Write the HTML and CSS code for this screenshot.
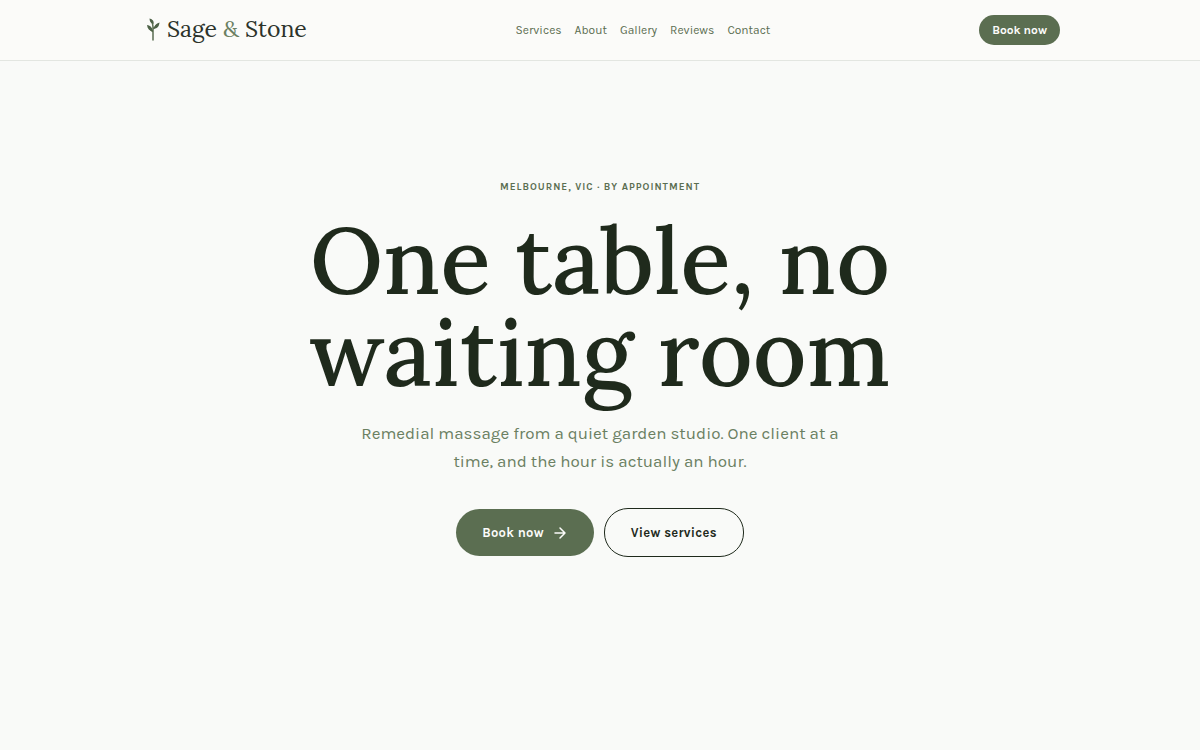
FILE: index.html
```html
<!DOCTYPE html>
<html lang="en-AU">
<head>
    <meta charset="UTF-8">
    <meta name="viewport" content="width=device-width, initial-scale=1.0">
    <title>Sage & Stone</title>
    <link rel="stylesheet" href="styles.css">
</head>
<body>
    <header class="site-header">
        <div class="header-inner">
            <a class="logo" href="#">
                <svg class="logo-mark" viewBox="0 0 26 28" aria-hidden="true">
                    <path class="stem" d="M13 25V12C13 10 12.500 8 11 5M13 14C14.500 13 15.500 12 17 10M13 17C11.500 15.500 10 14 8.500 12"/>
                    <path class="leaf" d="M9.500 3.500C12 4 14.500 6 13.500 9C11 8.500 9.500 6.500 9.500 3.500ZM19.500 7.500C19 11.500 17.500 13.500 13.800 13.800C14 11 16 8.500 19.500 7.500ZM7 10C10.500 10.500 12.800 13 12.800 16.500C9.500 16 7.500 13.500 7 10Z"/>
                </svg>
                <span>Sage <span class="amp">&amp;</span> Stone</span>
            </a>
            <nav class="nav" aria-label="Main">
                <a href="#services">Services</a>
                <a href="#about">About</a>
                <a href="#gallery">Gallery</a>
                <a href="#reviews">Reviews</a>
                <a href="#contact">Contact</a>
            </nav>
            <button class="btn btn-small" type="button">Book now</button>
        </div>
    </header>

    <main class="hero">
        <p class="eyebrow">Melbourne, VIC · By appointment</p>
        <h1 class="title">One table, no waiting room</h1>
        <p class="lead">Remedial massage from a quiet garden studio. One client at a time, and the hour is actually an hour.</p>
        <div class="actions">
            <button class="btn" type="button">
                Book now
                <svg class="arrow" viewBox="0 0 16 16" aria-hidden="true">
                    <path d="M3 8h10M8 3l5 5-5 5"/>
                </svg>
            </button>
            <button class="btn btn-outline" type="button">View services</button>
        </div>
    </main>
</body>
</html>
```
FILE: styles.css
```css
* {
    box-sizing: border-box;
}

body {
    margin: 0;
    min-height: 100vh;
    display: flex;
    flex-direction: column;
    background-color: #f9faf8;
    color: #1f2a1c;
    font-family: Karla, Roboto, "Liberation Sans", sans-serif;
}

a {
    color: inherit;
    text-decoration: none;
}

/* Header */
.site-header {
    background-color: #fbfbf9;
    border-bottom: 1px solid #e3e6e1;
}

.header-inner {
    display: flex;
    align-items: center;
    justify-content: space-between;
    max-width: 968px;
    min-height: 60px;
    margin: 0 auto;
    padding: 0 24px;
}

.logo {
    display: flex;
    align-items: center;
    gap: 1px;
    padding-bottom: 2px;
    color: #2c332b;
    font-family: Lora, "Liberation Serif", serif;
    font-size: 23px;
    line-height: 30px;
}

.logo-mark {
    width: 26px;
    height: 28px;
}

.stem {
    fill: none;
    stroke: #5b6e51;
    stroke-width: 1.5;
    stroke-linecap: round;
}

.leaf {
    fill: #4d6247;
}

.amp {
    color: #6b8062;
}

.nav {
    display: flex;
    gap: 13px;
    color: #5b6e51;
    font-size: 12px;
}

.nav a:hover {
    color: #1f2a1c;
}

/* Buttons */
.btn {
    display: inline-flex;
    align-items: center;
    gap: 8px;
    padding: 14px 26px;
    border: none;
    border-radius: 24px;
    background-color: #5b6e51;
    color: #fcfcfa;
    font-family: inherit;
    font-size: 13px;
    font-weight: 700;
    line-height: 19px;
    letter-spacing: 0.02em;
    cursor: pointer;
}

.btn-small {
    padding: 6px 13px;
    font-size: 12px;
    line-height: 18px;
    letter-spacing: 0;
}

.btn-outline {
    border: 1px solid #1f2a1c;
    background-color: transparent;
    color: #1f2a1c;
}

.arrow {
    width: 16px;
    height: 16px;
    fill: none;
    stroke: currentColor;
    stroke-width: 1.5;
    stroke-linecap: round;
    stroke-linejoin: round;
}

/* Hero */
.hero {
    flex: 1;
    display: flex;
    flex-direction: column;
    align-items: center;
    padding: 118px 24px;
    text-align: center;
}

.eyebrow {
    margin: 0;
    color: #5b6e51;
    font-size: 10px;
    font-weight: 700;
    line-height: 16px;
    letter-spacing: 0.1em;
    text-transform: uppercase;
}

.title {
    max-width: 700px;
    margin: 19px 0 0;
    font-family: Lora, "Liberation Serif", serif;
    font-size: 93px;
    font-weight: 500;
    line-height: 92px;
}

.lead {
    max-width: 500px;
    margin: 21px 0 0;
    color: #6b8062;
    font-size: 17px;
    line-height: 28px;
}

.actions {
    display: flex;
    flex-wrap: wrap;
    align-items: center;
    justify-content: center;
    gap: 10px;
    margin-top: 33px;
}
```
